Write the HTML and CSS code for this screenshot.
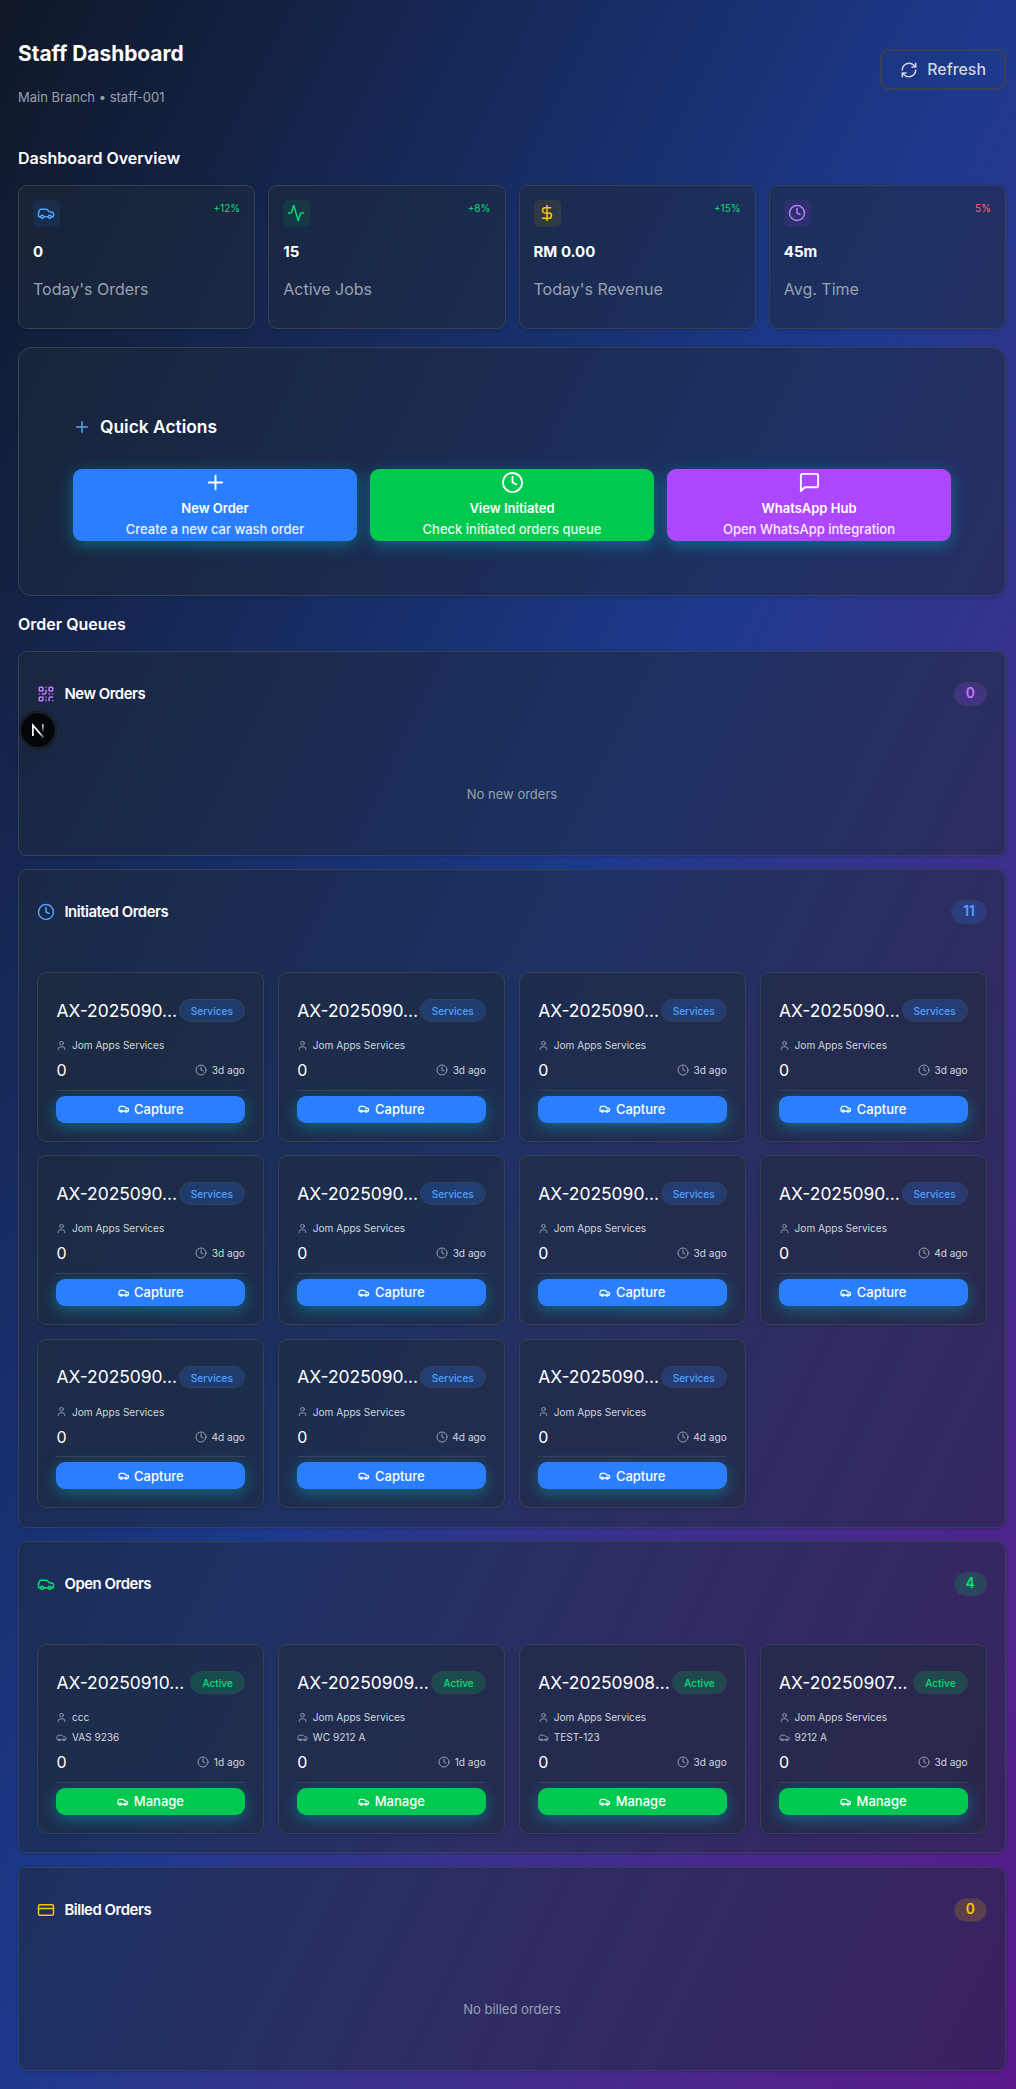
FILE: index.html
```html
<!DOCTYPE html>
<html lang="en">
<head>
<meta charset="utf-8">
<title>Staff Dashboard</title>
<link rel="stylesheet" href="styles.css">
</head>
<body>
<svg class="sprite" aria-hidden="true">
  <symbol id="car" viewBox="0 0 24 24"><path d="M19 17h2c.6 0 1-.4 1-1v-3c0-.9-.7-1.7-1.5-1.9C18.7 10.6 16 10 16 10s-1.3-1.4-2.2-2.3c-.5-.4-1.1-.7-1.8-.7H5c-.6 0-1.1.4-1.4.9l-1.4 2.9A3.7 3.7 0 0 0 2 12v4c0 .6.4 1 1 1h2"/><circle cx="7" cy="17" r="2"/><path d="M9 17h6"/><circle cx="17" cy="17" r="2"/></symbol>
  <symbol id="activity" viewBox="0 0 24 24"><path d="M22 12h-2.48a2 2 0 0 0-1.93 1.46l-2.35 8.36a.25.25 0 0 1-.48 0L9.24 2.18a.25.25 0 0 0-.48 0l-2.35 8.36A2 2 0 0 1 4.49 12H2"/></symbol>
  <symbol id="dollar" viewBox="0 0 24 24"><path d="M12 2v20M17 5H9.5a3.5 3.5 0 0 0 0 7h5a3.5 3.5 0 0 1 0 7H6"/></symbol>
  <symbol id="clock" viewBox="0 0 24 24"><circle cx="12" cy="12" r="10"/><path d="M12 6v6l4 2"/></symbol>
  <symbol id="plus" viewBox="0 0 24 24"><path d="M5 12h14M12 5v14"/></symbol>
  <symbol id="message" viewBox="0 0 24 24"><path d="M21 15a2 2 0 0 1-2 2H7l-4 4V5a2 2 0 0 1 2-2h14a2 2 0 0 1 2 2z"/></symbol>
  <symbol id="refresh" viewBox="0 0 24 24"><path d="M3 12a9 9 0 0 1 9-9 9.75 9.75 0 0 1 6.74 2.74L21 8M21 3v5h-5M21 12a9 9 0 0 1-9 9 9.75 9.75 0 0 1-6.74-2.74L3 16M8 16H3v5"/></symbol>
  <symbol id="qr" viewBox="0 0 24 24"><rect width="5" height="5" x="3" y="3" rx="1"/><rect width="5" height="5" x="16" y="3" rx="1"/><rect width="5" height="5" x="3" y="16" rx="1"/><path d="M21 16h-3a2 2 0 0 0-2 2v3M21 21v.01M12 7v3a2 2 0 0 1-2 2H7M3 12h.01M12 3h.01M12 16v.01M16 12h1M21 12v.01M12 21v-1"/></symbol>
  <symbol id="user" viewBox="0 0 24 24"><path d="M19 21v-2a4 4 0 0 0-4-4H9a4 4 0 0 0-4 4v2"/><circle cx="12" cy="7" r="4"/></symbol>
  <symbol id="card" viewBox="0 0 24 24"><rect width="20" height="14" x="2" y="5" rx="2"/><path d="M2 10h20"/></symbol>
</svg>

<main class="page">
  <header class="top">
    <div>
      <h1 class="title">Staff Dashboard</h1>
      <p class="subtitle">Main Branch • staff-001</p>
    </div>
    <button class="refresh"><svg class="icon"><use href="#refresh"/></svg>Refresh</button>
  </header>

  <h2 class="heading">Dashboard Overview</h2>
  <section class="stats">
    <div class="panel stat">
      <div class="stat-top"><span class="chip blue"><svg class="icon"><use href="#car"/></svg></span><span class="trend">+12%</span></div>
      <div class="stat-value">0</div><div class="stat-label">Today's Orders</div>
    </div>
    <div class="panel stat">
      <div class="stat-top"><span class="chip green"><svg class="icon"><use href="#activity"/></svg></span><span class="trend">+8%</span></div>
      <div class="stat-value">15</div><div class="stat-label">Active Jobs</div>
    </div>
    <div class="panel stat">
      <div class="stat-top"><span class="chip yellow"><svg class="icon"><use href="#dollar"/></svg></span><span class="trend">+15%</span></div>
      <div class="stat-value">RM 0.00</div><div class="stat-label">Today's Revenue</div>
    </div>
    <div class="panel stat">
      <div class="stat-top"><span class="chip purple"><svg class="icon"><use href="#clock"/></svg></span><span class="trend down">5%</span></div>
      <div class="stat-value">45m</div><div class="stat-label">Avg. Time</div>
    </div>
  </section>

  <section class="panel quick">
    <h3 class="quick-title"><svg class="icon"><use href="#plus"/></svg>Quick Actions</h3>
    <div class="actions">
      <button class="action bg-blue"><svg class="icon"><use href="#plus"/></svg><span class="action-name">New Order</span><span class="action-text">Create a new car wash order</span></button>
      <button class="action bg-green"><svg class="icon"><use href="#clock"/></svg><span class="action-name">View Initiated</span><span class="action-text">Check initiated orders queue</span></button>
      <button class="action bg-purple"><svg class="icon"><use href="#message"/></svg><span class="action-name">WhatsApp Hub</span><span class="action-text">Open WhatsApp integration</span></button>
    </div>
  </section>

  <h2 class="heading queues-heading">Order Queues</h2>
  <div class="queues">
    <section class="panel queue">
      <div class="queue-head"><svg class="icon c-purple"><use href="#qr"/></svg><h3 class="queue-title">New Orders</h3><span class="pill purple">0</span></div>
      <p class="empty">No new orders</p>
    </section>

    <section class="panel queue">
      <div class="queue-head"><svg class="icon c-blue"><use href="#clock"/></svg><h3 class="queue-title">Initiated Orders</h3><span class="pill blue">11</span></div>
      <div class="orders">
        <article class="panel order">
          <div class="order-head"><span class="order-id">AX-2025090…</span><span class="tag blue">Services</span></div>
          <div class="line"><svg class="icon"><use href="#user"/></svg>Jom Apps Services</div>
          <div class="order-sum"><span class="amount">0</span><span class="ago"><svg class="icon"><use href="#clock"/></svg>3d ago</span></div>
          <button class="go bg-blue"><svg class="icon"><use href="#car"/></svg>Capture</button>
        </article>
        <article class="panel order">
          <div class="order-head"><span class="order-id">AX-2025090…</span><span class="tag blue">Services</span></div>
          <div class="line"><svg class="icon"><use href="#user"/></svg>Jom Apps Services</div>
          <div class="order-sum"><span class="amount">0</span><span class="ago"><svg class="icon"><use href="#clock"/></svg>3d ago</span></div>
          <button class="go bg-blue"><svg class="icon"><use href="#car"/></svg>Capture</button>
        </article>
        <article class="panel order">
          <div class="order-head"><span class="order-id">AX-2025090…</span><span class="tag blue">Services</span></div>
          <div class="line"><svg class="icon"><use href="#user"/></svg>Jom Apps Services</div>
          <div class="order-sum"><span class="amount">0</span><span class="ago"><svg class="icon"><use href="#clock"/></svg>3d ago</span></div>
          <button class="go bg-blue"><svg class="icon"><use href="#car"/></svg>Capture</button>
        </article>
        <article class="panel order">
          <div class="order-head"><span class="order-id">AX-2025090…</span><span class="tag blue">Services</span></div>
          <div class="line"><svg class="icon"><use href="#user"/></svg>Jom Apps Services</div>
          <div class="order-sum"><span class="amount">0</span><span class="ago"><svg class="icon"><use href="#clock"/></svg>3d ago</span></div>
          <button class="go bg-blue"><svg class="icon"><use href="#car"/></svg>Capture</button>
        </article>
        <article class="panel order">
          <div class="order-head"><span class="order-id">AX-2025090…</span><span class="tag blue">Services</span></div>
          <div class="line"><svg class="icon"><use href="#user"/></svg>Jom Apps Services</div>
          <div class="order-sum"><span class="amount">0</span><span class="ago"><svg class="icon"><use href="#clock"/></svg>3d ago</span></div>
          <button class="go bg-blue"><svg class="icon"><use href="#car"/></svg>Capture</button>
        </article>
        <article class="panel order">
          <div class="order-head"><span class="order-id">AX-2025090…</span><span class="tag blue">Services</span></div>
          <div class="line"><svg class="icon"><use href="#user"/></svg>Jom Apps Services</div>
          <div class="order-sum"><span class="amount">0</span><span class="ago"><svg class="icon"><use href="#clock"/></svg>3d ago</span></div>
          <button class="go bg-blue"><svg class="icon"><use href="#car"/></svg>Capture</button>
        </article>
        <article class="panel order">
          <div class="order-head"><span class="order-id">AX-2025090…</span><span class="tag blue">Services</span></div>
          <div class="line"><svg class="icon"><use href="#user"/></svg>Jom Apps Services</div>
          <div class="order-sum"><span class="amount">0</span><span class="ago"><svg class="icon"><use href="#clock"/></svg>3d ago</span></div>
          <button class="go bg-blue"><svg class="icon"><use href="#car"/></svg>Capture</button>
        </article>
        <article class="panel order">
          <div class="order-head"><span class="order-id">AX-2025090…</span><span class="tag blue">Services</span></div>
          <div class="line"><svg class="icon"><use href="#user"/></svg>Jom Apps Services</div>
          <div class="order-sum"><span class="amount">0</span><span class="ago"><svg class="icon"><use href="#clock"/></svg>4d ago</span></div>
          <button class="go bg-blue"><svg class="icon"><use href="#car"/></svg>Capture</button>
        </article>
        <article class="panel order">
          <div class="order-head"><span class="order-id">AX-2025090…</span><span class="tag blue">Services</span></div>
          <div class="line"><svg class="icon"><use href="#user"/></svg>Jom Apps Services</div>
          <div class="order-sum"><span class="amount">0</span><span class="ago"><svg class="icon"><use href="#clock"/></svg>4d ago</span></div>
          <button class="go bg-blue"><svg class="icon"><use href="#car"/></svg>Capture</button>
        </article>
        <article class="panel order">
          <div class="order-head"><span class="order-id">AX-2025090…</span><span class="tag blue">Services</span></div>
          <div class="line"><svg class="icon"><use href="#user"/></svg>Jom Apps Services</div>
          <div class="order-sum"><span class="amount">0</span><span class="ago"><svg class="icon"><use href="#clock"/></svg>4d ago</span></div>
          <button class="go bg-blue"><svg class="icon"><use href="#car"/></svg>Capture</button>
        </article>
        <article class="panel order">
          <div class="order-head"><span class="order-id">AX-2025090…</span><span class="tag blue">Services</span></div>
          <div class="line"><svg class="icon"><use href="#user"/></svg>Jom Apps Services</div>
          <div class="order-sum"><span class="amount">0</span><span class="ago"><svg class="icon"><use href="#clock"/></svg>4d ago</span></div>
          <button class="go bg-blue"><svg class="icon"><use href="#car"/></svg>Capture</button>
        </article>
      </div>
    </section>

    <section class="panel queue">
      <div class="queue-head"><svg class="icon c-green"><use href="#car"/></svg><h3 class="queue-title">Open Orders</h3><span class="pill green">4</span></div>
      <div class="orders">
        <article class="panel order">
          <div class="order-head"><span class="order-id">AX-20250910…</span><span class="tag green">Active</span></div>
          <div class="line"><svg class="icon"><use href="#user"/></svg>ccc</div>
          <div class="line"><svg class="icon"><use href="#car"/></svg>VAS 9236</div>
          <div class="order-sum"><span class="amount">0</span><span class="ago"><svg class="icon"><use href="#clock"/></svg>1d ago</span></div>
          <button class="go bg-green"><svg class="icon"><use href="#car"/></svg>Manage</button>
        </article>
        <article class="panel order">
          <div class="order-head"><span class="order-id">AX-20250909…</span><span class="tag green">Active</span></div>
          <div class="line"><svg class="icon"><use href="#user"/></svg>Jom Apps Services</div>
          <div class="line"><svg class="icon"><use href="#car"/></svg>WC 9212 A</div>
          <div class="order-sum"><span class="amount">0</span><span class="ago"><svg class="icon"><use href="#clock"/></svg>1d ago</span></div>
          <button class="go bg-green"><svg class="icon"><use href="#car"/></svg>Manage</button>
        </article>
        <article class="panel order">
          <div class="order-head"><span class="order-id">AX-20250908…</span><span class="tag green">Active</span></div>
          <div class="line"><svg class="icon"><use href="#user"/></svg>Jom Apps Services</div>
          <div class="line"><svg class="icon"><use href="#car"/></svg>TEST-123</div>
          <div class="order-sum"><span class="amount">0</span><span class="ago"><svg class="icon"><use href="#clock"/></svg>3d ago</span></div>
          <button class="go bg-green"><svg class="icon"><use href="#car"/></svg>Manage</button>
        </article>
        <article class="panel order">
          <div class="order-head"><span class="order-id">AX-20250907…</span><span class="tag green">Active</span></div>
          <div class="line"><svg class="icon"><use href="#user"/></svg>Jom Apps Services</div>
          <div class="line"><svg class="icon"><use href="#car"/></svg>9212 A</div>
          <div class="order-sum"><span class="amount">0</span><span class="ago"><svg class="icon"><use href="#clock"/></svg>3d ago</span></div>
          <button class="go bg-green"><svg class="icon"><use href="#car"/></svg>Manage</button>
        </article>
      </div>
    </section>

    <section class="panel queue">
      <div class="queue-head"><svg class="icon c-yellow"><use href="#card"/></svg><h3 class="queue-title">Billed Orders</h3><span class="pill yellow">0</span></div>
      <p class="empty">No billed orders</p>
    </section>
  </div>
</main>

<div class="dev-badge">
  <svg viewBox="0 0 36 36" fill="none">
    <defs>
      <linearGradient id="fade-a" x1="14" y1="14" x2="25" y2="25" gradientUnits="userSpaceOnUse"><stop offset=".55" stop-color="#fff"/><stop offset="1" stop-color="#fff" stop-opacity=".2"/></linearGradient>
      <linearGradient id="fade-b" x1="0" y1="12" x2="0" y2="21" gradientUnits="userSpaceOnUse"><stop stop-color="#fff"/><stop offset="1" stop-color="#fff" stop-opacity="0"/></linearGradient>
    </defs>
    <path d="M12.9 24V13.2L23.6 25.6" stroke="url(#fade-a)" stroke-width="1.7"/>
    <path d="M22.8 12.3v9" stroke="url(#fade-b)" stroke-width="1.6"/>
  </svg>
</div>
</body>
</html>
```
FILE: styles.css
```css
* { box-sizing: border-box; margin: 0; padding: 0; }

body {
  font-family: Inter, sans-serif;
  font-size: 13px;
  color: #fff;
  background: linear-gradient(to bottom right in oklab, #101828, #1c398e, #59168b);
  min-height: 2089px;
}

button { font: inherit; color: inherit; border: 0; background: none; }
.sprite { display: none; }
.icon {
  width: 18px; height: 18px; flex: none;
  fill: none; stroke: currentColor; stroke-width: 2;
  stroke-linecap: round; stroke-linejoin: round;
}

.page { padding: 34px 10px 17px 18px; }

.top { display: flex; justify-content: space-between; align-items: flex-start; height: 107px; }
.title { padding-top: 1px; font-size: 20.9px; font-weight: 700; line-height: 38px; }
.subtitle { margin-top: 14px; font-size: 13px; line-height: 20px; color: #99a1af; }
.refresh {
  display: flex; align-items: center; gap: 9px;
  margin-top: 15px; height: 41px; padding: 0 18px;
  border: 2px solid #364153; border-radius: 9px;
  font-size: 15.9px; font-weight: 500; color: #d1d5dc;
}

.heading { font-size: 16px; font-weight: 600; line-height: 34px; }

.panel {
  background: rgba(30, 41, 57, .5);
  border: 1px solid #364153;
  border-radius: 9px;
  box-shadow: 0 1px 3px rgba(0, 0, 0, .15);
}

.stats { display: grid; grid-template-columns: repeat(4, 1fr); gap: 13px; margin-top: 10px; }
.stat { height: 144px; padding: 14px; }
.stat-top { display: flex; justify-content: space-between; align-items: flex-start; }
.chip { width: 27px; height: 27px; padding: 4px; border-radius: 5px; }
.chip .icon { display: block; }
.trend { font-size: 10.1px; line-height: 17px; color: #05df72; }
.trend.down { color: #ff6467; }
.stat-value { margin-top: 15px; font-size: 15px; font-weight: 700; line-height: 20px; }
.stat-label { margin-top: 15px; font-size: 16px; line-height: 24px; color: #99a1af; }

.quick { margin-top: 18px; height: 249px; padding: 64px 54px 0; border-radius: 13px; }
.quick-title {
  display: flex; align-items: center; gap: 9px;
  font-size: 17.4px; font-weight: 600; line-height: 30px;
}
.quick-title .icon { color: #51a2ff; }
.actions { display: grid; grid-template-columns: repeat(3, 1fr); gap: 13px; margin-top: 27px; }
.action {
  display: flex; flex-direction: column; align-items: center;
  height: 72px; padding-top: 2px; border-radius: 9px;
  font-size: 13px; font-weight: 500;
  box-shadow: 0 4px 15px rgba(6, 182, 212, .43);
}
.action .icon { width: 23px; height: 23px; }
.action-name { margin-top: 4px; font-weight: 600; line-height: 21px; }
.action-text { line-height: 21px; opacity: .9; }
.bg-blue { background: #2b7fff; }
.bg-green { background: #00c950; }
.bg-purple { background: #ad46ff; }

.queues-heading { margin-top: 11px; }
.queues { display: flex; flex-direction: column; gap: 13.4px; margin-top: 10px; }
.queue { min-height: 204.7px; padding: 30px 18.4px 18.4px; }
.queue-head { display: flex; align-items: center; height: 24px; }
.queue-title { margin-left: 9px; font-size: 14.9px; font-weight: 600; letter-spacing: -.03em; }
.pill {
  margin-left: auto; height: 24px; padding: 0 10.8px;
  border: 1px solid #364153; border-radius: 12px;
  font-size: 13.8px; font-weight: 600; line-height: 21px;
}
.blue { background: rgba(43, 127, 255, .2); color: #51a2ff; }
.green { background: rgba(0, 201, 80, .2); color: #05df72; }
.yellow { background: rgba(240, 177, 0, .2); color: #fdc700; }
.purple { background: rgba(173, 70, 255, .2); color: #c27aff; }
.chip.blue { background: rgba(43, 127, 255, .1); }
.chip.green { background: rgba(0, 201, 80, .1); }
.chip.yellow { background: rgba(240, 177, 0, .1); }
.chip.purple { background: rgba(173, 70, 255, .1); }
.c-purple { color: #c27aff; }
.c-blue { color: #51a2ff; }
.c-green { color: #05df72; }
.c-yellow { color: #fdc700; }
.empty { margin-top: 77.5px; text-align: center; font-size: 13px; line-height: 20px; color: #99a1af; }

.orders { display: grid; grid-template-columns: repeat(4, 1fr); gap: 13.5px 14.4px; margin-top: 48px; }
.order { padding: 18px 18px 18.3px; }
.order-head { display: flex; justify-content: space-between; align-items: center; height: 38.5px; margin-bottom: 5.4px; }
.order-id { font-size: 17.4px; font-weight: 400; white-space: nowrap; }
.tag {
  height: 22.7px; padding: 0 11px;
  border: 1px solid #364153; border-radius: 12px;
  font-size: 10.1px; font-weight: 500; line-height: 22px;
}
.line { display: flex; align-items: center; gap: 4.5px; height: 20.1px; font-size: 10.1px; color: #d1d5dc; }
.line .icon { width: 11px; height: 11px; color: #99a1af; }
.order-sum {
  display: flex; justify-content: space-between; align-items: center;
  height: 35.5px; padding-bottom: 4.3px; border-bottom: 1px solid #364153;
}
.amount { font-size: 16px; font-weight: 400; }
.ago { display: flex; align-items: center; gap: 4.5px; font-size: 10.1px; color: #d1d5dc; }
.ago .icon { width: 12px; height: 12px; color: #99a1af; }
.go {
  display: flex; align-items: center; justify-content: center; gap: 5px;
  width: 100%; height: 26.8px; margin-top: 5.2px; border-radius: 9px;
  font-size: 13px; font-weight: 500;
  box-shadow: 0 4px 15px rgba(6, 182, 212, .43);
}
.go .icon { width: 11.5px; height: 11.5px; stroke-width: 2.5; }

/* Developer indicator floats over the page */
.dev-badge {
  position: absolute; left: 20px; top: 712px;
  width: 36px; height: 36px; border-radius: 50%;
  background: rgba(0, 0, 0, .85);
  box-shadow: 0 0 0 1px #171717, inset 0 0 0 1px rgba(255, 255, 255, .14), 0 16px 32px -8px rgba(0, 0, 0, .24);
}
.dev-badge svg { display: block; width: 36px; height: 36px; }
```
